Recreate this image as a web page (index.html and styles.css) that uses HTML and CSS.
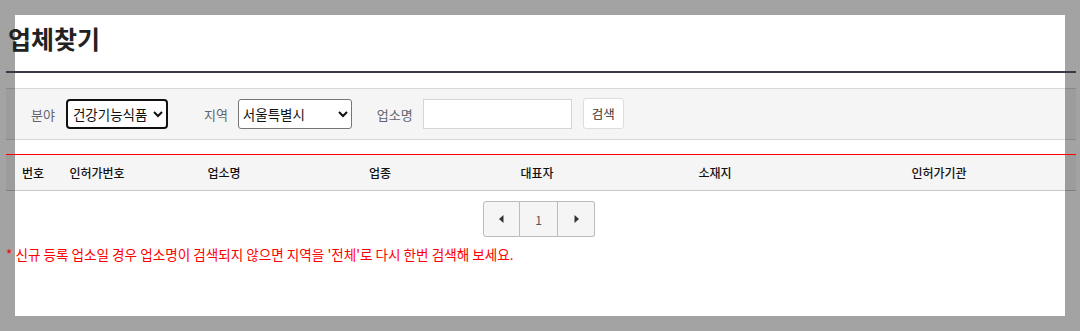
FILE: index.html
```html
<!DOCTYPE html>
<html>
<head>
    <title>업체찾기</title>
    <link rel="stylesheet" href="styles.css">
</head>
<body>
    <div class="popup">
        <div class="popup-inner">
            <h2 class="title">업체찾기</h2>

            <div class="search-box">
                <label class="label">분야</label>
                <select class="select select-field">
                    <option>건강기능식품</option>
                </select>
                <label class="label label-area">지역</label>
                <select class="select select-area">
                    <option>서울특별시</option>
                </select>
                <label class="label label-name">업소명</label>
                <input type="text" class="text-input">
                <button class="btn-search">검색</button>
            </div>

            <table class="result-table">
                <colgroup>
                    <col style="width:54px">
                    <col style="width:74px">
                    <col style="width:180px">
                    <col style="width:132px">
                    <col style="width:182px">
                    <col style="width:174px">
                    <col>
                </colgroup>
                <thead>
                    <tr>
                        <th>번호</th>
                        <th>인허가번호</th>
                        <th>업소명</th>
                        <th>업종</th>
                        <th>대표자</th>
                        <th>소재지</th>
                        <th>인허가기관</th>
                    </tr>
                </thead>
            </table>

            <div class="paging">
                <a class="page-btn">
                    <svg width="5" height="8" viewBox="0 0 5 8"><path d="M4.5 0 L0 4 L4.5 8 Z" fill="#333"/></svg>
                </a>
                <a class="page-btn page-num">1</a>
                <a class="page-btn">
                    <svg width="5" height="8" viewBox="0 0 5 8"><path d="M0.5 0 L5 4 L0.5 8 Z" fill="#333"/></svg>
                </a>
            </div>

            <p class="notice">* 신규 등록 업소일 경우 업소명이 검색되지 않으면 지역을 '전체'로 다시 한번 검색해 보세요.</p>
        </div>
    </div>
</body>
</html>
```

FILE: styles.css
```css
html, body {
    margin: 0;
    height: 100%;
}

body {
    background-color: #a3a3a3;
    padding: 15px;
    box-sizing: border-box;
    font-family: "Noto Sans CJK KR", "Noto Sans", sans-serif;
    color: #222;
}

.popup {
    background-color: #fff;
    height: 301px;
}

.popup-inner {
    margin: 0 -11px 0 -9px;
}

.title {
    margin: 0;
    padding: 6px 0 15px 2px;
    font-size: 25px;
    line-height: 35px;
    font-weight: bold;
    color: #222;
    border-bottom: 2px solid #3b3947;
}

.search-box {
    margin-top: 15px;
    display: flex;
    align-items: center;
    height: 50px;
    padding: 0 25px;
    background-color: rgba(0, 0, 0, 0.04);
    border-top: 1px solid rgba(0, 0, 0, 0.12);
    border-bottom: 1px solid rgba(0, 0, 0, 0.12);
}

.label {
    font-size: 13px;
    color: #5f6470;
    margin-right: 10px;
}

.label-area {
    margin-left: 36px;
}

.label-name {
    margin-left: 25px;
}

.select {
    font-family: "Noto Sans CJK KR", sans-serif;
    font-size: 13.5px;
    color: #111;
    height: 30px;
    background-color: #fff;
}

.select-field {
    width: 102px;
    margin-left: 1px;
    border: 2px solid #111;
    border-radius: 4px;
    padding: 0 1px;
}

.select-area {
    width: 114px;
    border: 1px solid #767676;
    border-radius: 3px;
}

.text-input {
    width: 149px;
    height: 30px;
    box-sizing: border-box;
    border: 1px solid #d5d5d5;
    padding: 0 6px;
    font-size: 13px;
}

.btn-search {
    margin-left: 11px;
    width: 41px;
    height: 31px;
    padding: 0;
    margin-top: -2px;
    font-family: "Noto Sans CJK KR", sans-serif;
    font-size: 12.5px;
    color: #333;
    background-color: #fff;
    border: 1px solid #ddd;
    border-radius: 3px;
}

.result-table {
    margin-top: 14px;
    width: 100%;
    border-collapse: collapse;
    table-layout: fixed;
    border-top: 1px solid #f00;
}

.result-table th {
    height: 35px;
    padding: 0;
    font-size: 12px;
    font-weight: 500;
    color: #111;
    background-color: rgba(0, 0, 0, 0.04);
    border-bottom: 1px solid rgba(0, 0, 0, 0.18);
}

.paging {
    margin-top: 10px;
    display: flex;
    justify-content: center;
    padding-right: 4px;
}

.page-btn {
    width: 37px;
    height: 36px;
    box-sizing: border-box;
    display: flex;
    align-items: center;
    justify-content: center;
    background-color: #f5f5f5;
    border: 1px solid #bbb;
    font-size: 12px;
    color: #555;
}

.page-btn + .page-btn {
    border-left: none;
}

.page-btn:first-child {
    border-radius: 3px 0 0 3px;
}

.page-btn:last-child {
    border-radius: 0 3px 3px 0;
}

.page-num {
    width: 38px;
}

.notice {
    margin: 8px 0 0;
    font-size: 13.6px;
    line-height: 18px;
    color: #f00;
}
```
